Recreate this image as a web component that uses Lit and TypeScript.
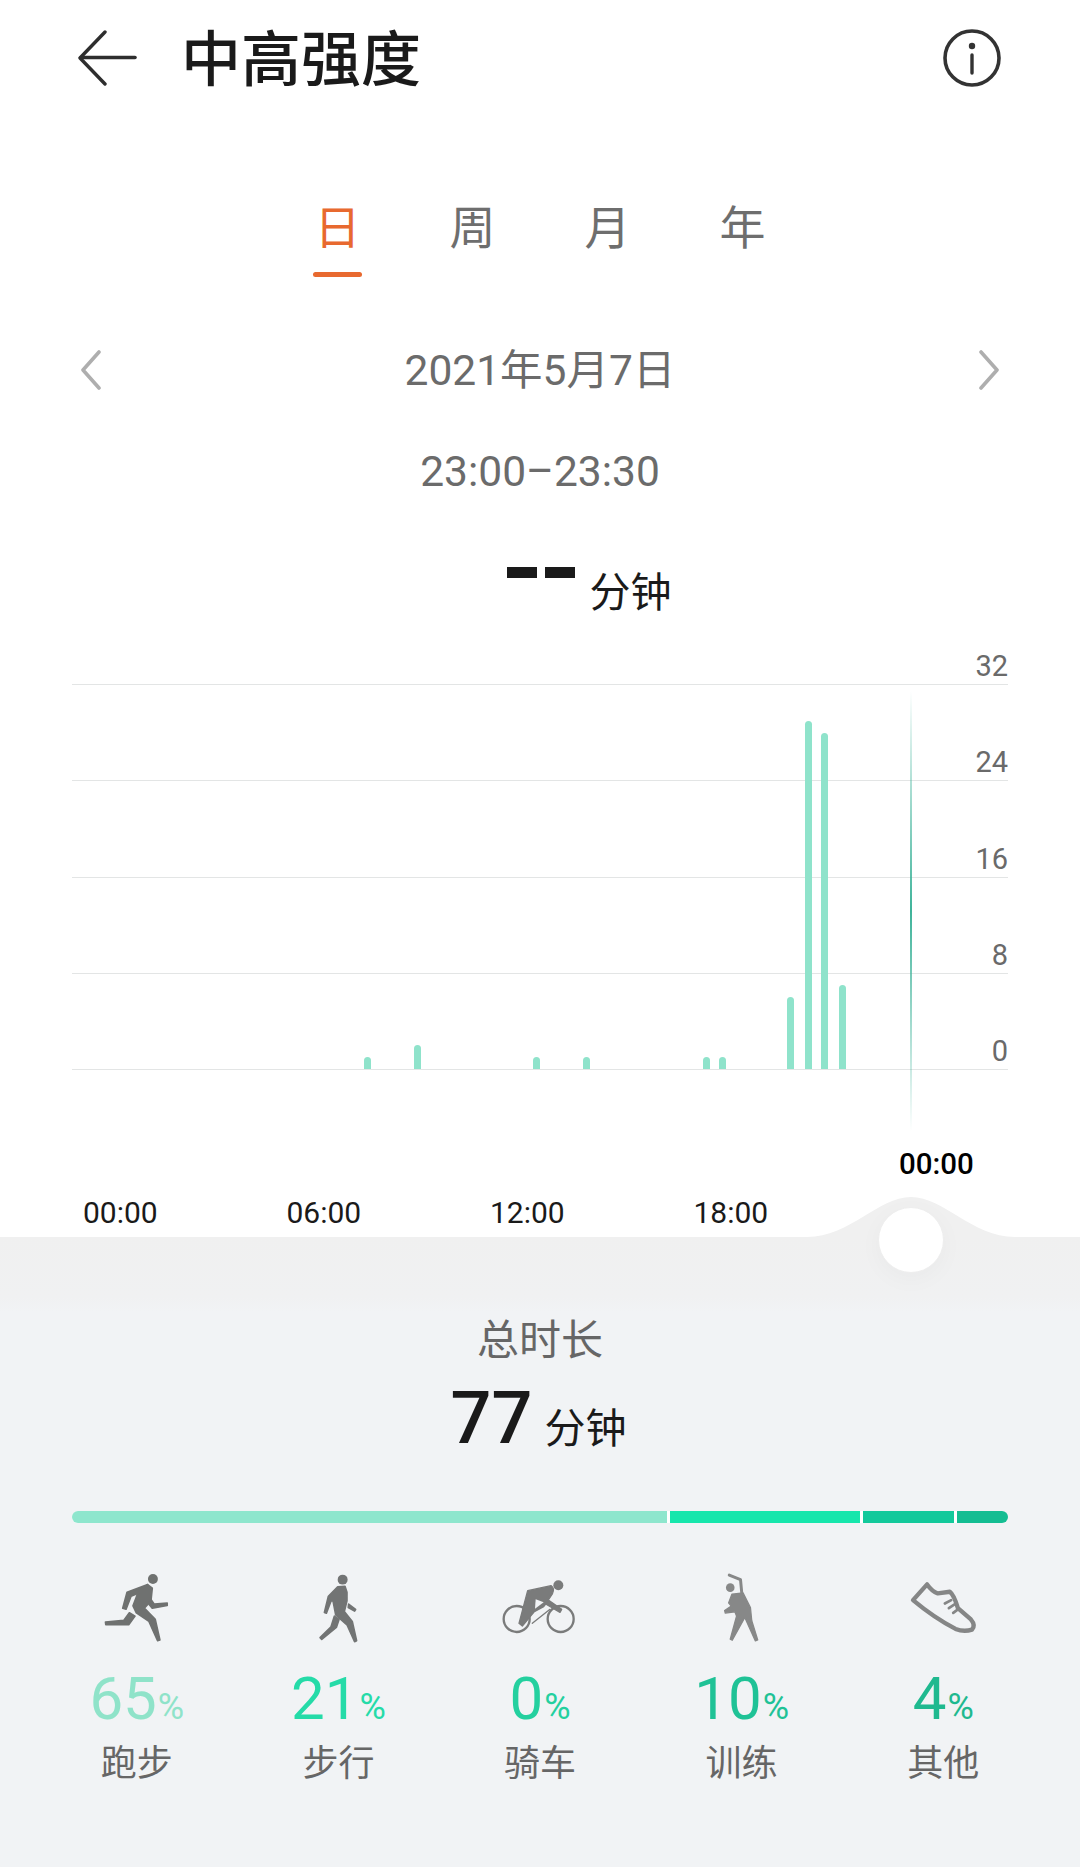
import { LitElement, html, css, svg } from "lit";
import { customElement } from "lit/decorators.js";

const BARS = [
  { x: 364, v: 1 }, { x: 414, v: 2 }, { x: 533, v: 1 }, { x: 583, v: 1 }, { x: 703, v: 1 },
  { x: 719, v: 1 }, { x: 787, v: 6 }, { x: 805, v: 29 }, { x: 821, v: 28 }, { x: 839, v: 7 },
];
const SEGMENTS = [
  { w: 595, c: "#8ee6cd" }, { w: 190, c: "#17e6ac" }, { w: 91, c: "#13c99b" }, { w: 51, c: "#14bd92" },
];

const iconRun = svg`<svg class="ic" viewBox="125 60 210 220" width="70" height="73">
  <g fill="#6f7170" stroke="#6f7170" stroke-width="5" stroke-linejoin="round">
  <path d="M262 101 L200 124 L187 172 L197 175 L212 136 L232 128 Z"/>
  <path d="M262 101 L276 112 L272 150 L252 172 L285 206 L299 268 L292 270 L266 212 L228 186 L218 165 L232 128 Z"/>
  <path d="M207 186 L224 196 L205 222 L136 222 L135 214 L190 209 Z"/>
  <path d="M272 146 L282 160 L321 157 L321 164 L276 172 L266 160 Z"/>
  </g>
  <circle cx="278" cy="84" r="15" fill="#6f7170"/></svg>`;

const iconWalk = svg`<svg class="ic" viewBox="765 60 135 220" width="45" height="73">
  <g fill="#727474" stroke="#727474" stroke-width="5" stroke-linejoin="round">
  <path d="M830 108 L852 106 L858 124 L858 150 L850 182 L874 212 L887 270 L881 273 L858 222 L824 192 L816 150 L810 150 L796 187 L790 185 L802 136 Z"/>
  <path d="M820 196 L834 206 L826 230 L782 266 L777 261 L810 228 Z"/>
  <path d="M863 160 L884 176 L881 181 L862 170 Z"/>
  </g>
  <circle cx="845" cy="86" r="15" fill="#727474"/></svg>`;

const iconBike = svg`<svg class="ic" viewBox="0 0 270 225" width="90" height="75">
  <g fill="none" stroke="#7a7b7b" stroke-linecap="round" stroke-linejoin="round">
  <circle cx="65" cy="147" r="39" stroke-width="7"/>
  <circle cx="197" cy="147" r="39" stroke-width="7"/>
  <path d="M112 160 L165 118" stroke-width="4"/>
  </g>
  <path fill="#7a7b7b" stroke="#7a7b7b" stroke-width="4" stroke-linejoin="round" d="M98 62 L168 47 Q180 55 172 72 L160 90 L200 118 L195 127 L152 102 L146 110 L118 125 L82 168 L72 160 Z"/>
  <path d="M122 88 L146 97 L120 116 Z" fill="#f1f3f5"/>
  <circle cx="190" cy="46" r="15" fill="#7a7b7b"/></svg>`;

const iconStretch = svg`<svg class="ic" viewBox="540 60 130 220" width="43" height="73">
  <g fill="none" stroke="#878888" stroke-linecap="round" stroke-linejoin="round">
  <path d="M568 72 L602 86 L606 128" stroke-width="9"/>
  </g>
  <path fill="#878888" stroke="#878888" stroke-width="4" stroke-linejoin="round" d="M576 130 L610 126 L632 170 L636 210 L654 268 L647 271 L615 200 L577 269 L571 266 L590 196 L585 183 L556 187 L554 179 L574 166 L566 156 Z"/>
  <circle cx="571" cy="110" r="13" fill="#878888"/></svg>`;

const iconShoe = svg`<svg class="ic" viewBox="1100 85 215 170" width="72" height="57">
  <g fill="none" stroke="#858686" stroke-linecap="round" stroke-linejoin="round">
  <path d="M1118 148 L1160 101 Q1175 122 1192 128 L1228 123 Q1240 132 1252 172 L1290 205 Q1306 224 1294 236 Q1270 244 1245 234 Q1180 200 1118 148 Z" stroke-width="13"/>
  <path d="M1213 158 L1232 148 M1225 172 L1243 160 M1238 186 L1254 174" stroke-width="8"/>
  </g></svg>`;

const STATS = [
  { icon: iconRun, v: "65", c: "#8fe3c9", l: "跑步" },
  { icon: iconWalk, v: "21", c: "#25dba8", l: "步行" },
  { icon: iconBike, v: "0", c: "#24d09f", l: "骑车" },
  { icon: iconStretch, v: "10", c: "#1fc296", l: "训练" },
  { icon: iconShoe, v: "4", c: "#1fb98f", l: "其他" },
];

@customElement("app-root")
export class AppRoot extends LitElement {
  static styles = css`
    :host {
      display: block; position: relative; width: 1080px; height: 1867px; overflow: hidden; background: #fff;
      font-family: Roboto, "Noto Sans CJK SC", sans-serif; color: #666;
    }
    svg { display: block; }
    .header { display: flex; align-items: center; height: 116px; padding: 0 79px 0 78px; }
    .back { margin-right: 43px; }
    .title { flex: 1; font-size: 60px; font-weight: 500; color: #1a1a1a; line-height: 116px; position: relative; top: 3px; }
    .info { position: relative; top: 1px; }
    .tabs { display: flex; padding: 76px 0 0 270px; height: 85px; }
    .tab { width: 135px; display: flex; flex-direction: column; align-items: center; font-size: 46px; line-height: 72px; color: #6e6e6e; height: 85px; }
    .tab.on { color: #e8692f; }
    .tab i { display: block; width: 49px; height: 6px; border-radius: 3px; background: #e8692f; margin-top: 8px; }
    .date { display: flex; align-items: center; justify-content: space-between; padding: 0 80px; height: 60px; margin-top: 63px; }
    .date span { font-size: 42.5px; line-height: 60px; color: #6b6b6b; position: relative; top: 1px; }
    .time { text-align: center; font-size: 42.5px; line-height: 60px; margin-top: 42px; color: #6b6b6b; }
    .now { display: flex; justify-content: center; align-items: flex-start; height: 70px; margin-top: 60px; padding-left: 98px; }
    .dashes { display: flex; gap: 8px; margin: 5px 15px 0 0; }
    .dashes i { display: block; width: 30px; height: 11px; background: #1a1a1a; }
    .unit { font-size: 41px; line-height: 60px; color: #1a1a1a; }
    .now .unit { padding-top: 1px; }
    .chart { position: relative; height: 588px; margin-top: 15px; }
    .rows { padding: 0 72px; }
    .row { box-sizing: border-box; height: 96.25px; border-bottom: 1px solid #e3e5e5; display: flex; justify-content: flex-end; align-items: flex-end; font-size: 29px; line-height: 42px; color: #6a6a6a; }
    .row:first-child { height: 38px; }
    .row span { margin-bottom: -3px; }
    .bar { position: absolute; width: 7px; background: #8fe3cb; border-radius: 3.5px 3.5px 0 0; }
    .cursor { position: absolute; left: 910px; top: 44px; width: 2px; height: 440px; background: linear-gradient(to bottom, rgba(63,179,154,0), #3fb39a 50%, rgba(63,179,154,0)); }
    .sel { position: absolute; left: 899px; top: 497px; font-size: 29.5px; font-weight: 500; color: #000; line-height: 40px; }
    .xlabels { position: absolute; left: 83px; top: 546px; display: flex; }
    .xlabels span { width: 203.5px; font-size: 30px; line-height: 40px; color: #1a1a1a; }
    .hump { position: absolute; left: 780px; top: 1190px; }
    .knob { position: absolute; left: 878px; top: 1207px; width: 66px; height: 66px; box-sizing: border-box; border-radius: 50%; background: #fff; border: 1px solid #eeeeee; box-shadow: 0 6px 24px rgba(0,0,0,0.03); }
    .panel { position: absolute; left: 0; right: 0; top: 1237px; bottom: 0; background: linear-gradient(to bottom, #f0f0f0, #f0f1f2 60px, #f1f3f5 75px); display: flex; flex-direction: column; }
    .total { text-align: center; font-size: 42px; line-height: 60px; margin-top: 74px; color: #666; }
    .sum { display: flex; justify-content: center; align-items: baseline; gap: 12px; height: 84px; margin-top: 6px; padding-right: 3px; }
    .sum b { font-size: 72px; font-weight: 500; line-height: 84px; color: #1a1a1a; }
    .progress { display: flex; gap: 3px; margin: 50px 72px 0; height: 12px; border-radius: 6px; overflow: hidden; background: #fff; }
    .progress i { display: block; height: 12px; }
    .stats { display: grid; grid-template-columns: repeat(5, 1fr); padding: 0 36px; margin-top: 47px; }
    .stat { display: flex; flex-direction: column; align-items: center; }
    .iconbox { height: 74px; display: flex; align-items: center; justify-content: center; }
    .val { font-size: 60px; line-height: 70px; margin-top: 20px; display: flex; align-items: baseline; }
    .val small { font-size: 36px; margin-left: 1px; }
    .lab { font-size: 36px; line-height: 48px; color: #666; margin-top: -2px; }
  `;

  render() {
    return html`
      <div class="header">
        <svg class="back" width="60" height="56" viewBox="0 0 60 56" fill="none" stroke="#2e2e2e" stroke-linecap="round" stroke-linejoin="round">
          <path d="M27 2 L2 28 L27 54" stroke-width="3.4"/>
          <path d="M3 27.5 H57" stroke-width="3.6"/>
        </svg>
        <div class="title">中高强度</div>
        <svg class="info" width="58" height="60" viewBox="0 0 58 60" fill="none" stroke="#333">
          <circle cx="29" cy="29" r="27" stroke-width="3.6"/>
          <circle cx="29" cy="17" r="3.2" fill="#333" stroke="none"/>
          <path d="M29 26 V44" stroke-width="3.4" stroke-linecap="round"/>
        </svg>
      </div>
      <div class="tabs">
        <div class="tab on">日<i></i></div>
        <div class="tab">周</div>
        <div class="tab">月</div>
        <div class="tab">年</div>
      </div>
      <div class="date">
        <svg width="22" height="40" viewBox="0 0 22 40" fill="none" stroke="#aeaeae" stroke-width="3.6" stroke-linecap="round" stroke-linejoin="round"><path d="M19 2 L3 20 L19 38"/></svg>
        <span>2021年5月7日</span>
        <svg width="22" height="40" viewBox="0 0 22 40" fill="none" stroke="#aeaeae" stroke-width="3.6" stroke-linecap="round" stroke-linejoin="round"><path d="M3 2 L19 20 L3 38"/></svg>
      </div>
      <div class="time">23:00–23:30</div>
      <div class="now">
        <div class="dashes"><i></i><i></i></div>
        <div class="unit">分钟</div>
      </div>
      <div class="chart">
        <div class="rows">
          ${["32", "24", "16", "8", "0"].map((t) => html`<div class="row"><span>${t}</span></div>`)}
        </div>
        ${BARS.map((b) => html`<div class="bar" style="left:${b.x}px;top:${422 - b.v * 12}px;height:${b.v * 12}px"></div>`)}
        <div class="cursor"></div>
        <div class="sel">00:00</div>
        <div class="xlabels"><span>00:00</span><span>06:00</span><span>12:00</span><span>18:00</span></div>
      </div>
      <div class="panel">
        <div class="total">总时长</div>
        <div class="sum"><b>77</b><span class="unit">分钟</span></div>
        <div class="progress">${SEGMENTS.map((s) => html`<i style="width:${s.w}px;background:${s.c}"></i>`)}</div>
        <div class="stats">
          ${STATS.map((s) => html`<div class="stat">
            <div class="iconbox">${s.icon}</div>
            <div class="val" style="color:${s.c}">${s.v}<small>%</small></div>
            <div class="lab">${s.l}</div>
          </div>`)}
        </div>
      </div>
      <svg class="hump" width="262" height="48" viewBox="0 0 262 48"><path d="M0 47 L27 47 C70 47 98 7 131 7 C164 7 192 47 235 47 L262 47 L262 48 L0 48 Z" fill="#f0f0f0"/></svg>
      <div class="knob"></div>
    `;
  }
}
